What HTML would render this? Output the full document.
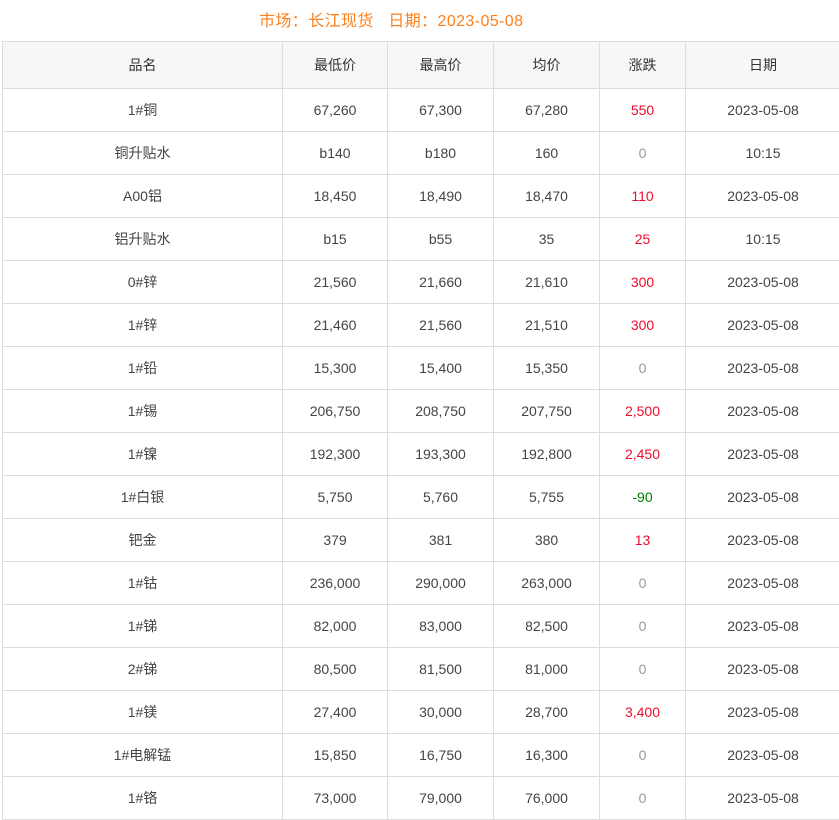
<!DOCTYPE html>
<html><head><meta charset="utf-8"><style>
body{margin:0;background:#fff;font-family:"Liberation Sans","Noto Sans CJK SC",sans-serif;}
.t{position:absolute;top:11px;left:259px;font-size:16px;color:#ff7f1a;white-space:nowrap;line-height:22px;letter-spacing:0.4px;}
table{position:absolute;left:2px;top:41px;border-collapse:collapse;table-layout:fixed;width:838px;}
td,th{border:1px solid #ddd;text-align:center;font-size:14px;color:#444;font-weight:normal;height:42px;padding:0;}
th{background:#f7f7f7;height:46px;color:#333;}
.r{color:#f00c2c}.g{color:#008000}.z{color:#999}
</style></head><body>
<div class="t">市场：长江现货&nbsp;&nbsp;&nbsp;日期：2023-05-08</div>
<table>
<colgroup><col style="width:280px"><col style="width:105px"><col style="width:106px"><col style="width:106px"><col style="width:86px"><col style="width:155px"></colgroup>
<tr><th>品名</th><th>最低价</th><th>最高价</th><th>均价</th><th>涨跌</th><th>日期</th></tr>
<tr><td>1#铜</td><td>67,260</td><td>67,300</td><td>67,280</td><td class="r">550</td><td>2023-05-08</td></tr>
<tr><td>铜升贴水</td><td>b140</td><td>b180</td><td>160</td><td class="z">0</td><td>10:15</td></tr>
<tr><td>A00铝</td><td>18,450</td><td>18,490</td><td>18,470</td><td class="r">110</td><td>2023-05-08</td></tr>
<tr><td>铝升贴水</td><td>b15</td><td>b55</td><td>35</td><td class="r">25</td><td>10:15</td></tr>
<tr><td>0#锌</td><td>21,560</td><td>21,660</td><td>21,610</td><td class="r">300</td><td>2023-05-08</td></tr>
<tr><td>1#锌</td><td>21,460</td><td>21,560</td><td>21,510</td><td class="r">300</td><td>2023-05-08</td></tr>
<tr><td>1#铅</td><td>15,300</td><td>15,400</td><td>15,350</td><td class="z">0</td><td>2023-05-08</td></tr>
<tr><td>1#锡</td><td>206,750</td><td>208,750</td><td>207,750</td><td class="r">2,500</td><td>2023-05-08</td></tr>
<tr><td>1#镍</td><td>192,300</td><td>193,300</td><td>192,800</td><td class="r">2,450</td><td>2023-05-08</td></tr>
<tr><td>1#白银</td><td>5,750</td><td>5,760</td><td>5,755</td><td class="g">-90</td><td>2023-05-08</td></tr>
<tr><td>钯金</td><td>379</td><td>381</td><td>380</td><td class="r">13</td><td>2023-05-08</td></tr>
<tr><td>1#钴</td><td>236,000</td><td>290,000</td><td>263,000</td><td class="z">0</td><td>2023-05-08</td></tr>
<tr><td>1#锑</td><td>82,000</td><td>83,000</td><td>82,500</td><td class="z">0</td><td>2023-05-08</td></tr>
<tr><td>2#锑</td><td>80,500</td><td>81,500</td><td>81,000</td><td class="z">0</td><td>2023-05-08</td></tr>
<tr><td>1#镁</td><td>27,400</td><td>30,000</td><td>28,700</td><td class="r">3,400</td><td>2023-05-08</td></tr>
<tr><td>1#电解锰</td><td>15,850</td><td>16,750</td><td>16,300</td><td class="z">0</td><td>2023-05-08</td></tr>
<tr><td>1#铬</td><td>73,000</td><td>79,000</td><td>76,000</td><td class="z">0</td><td>2023-05-08</td></tr>
</table>
</body></html>
